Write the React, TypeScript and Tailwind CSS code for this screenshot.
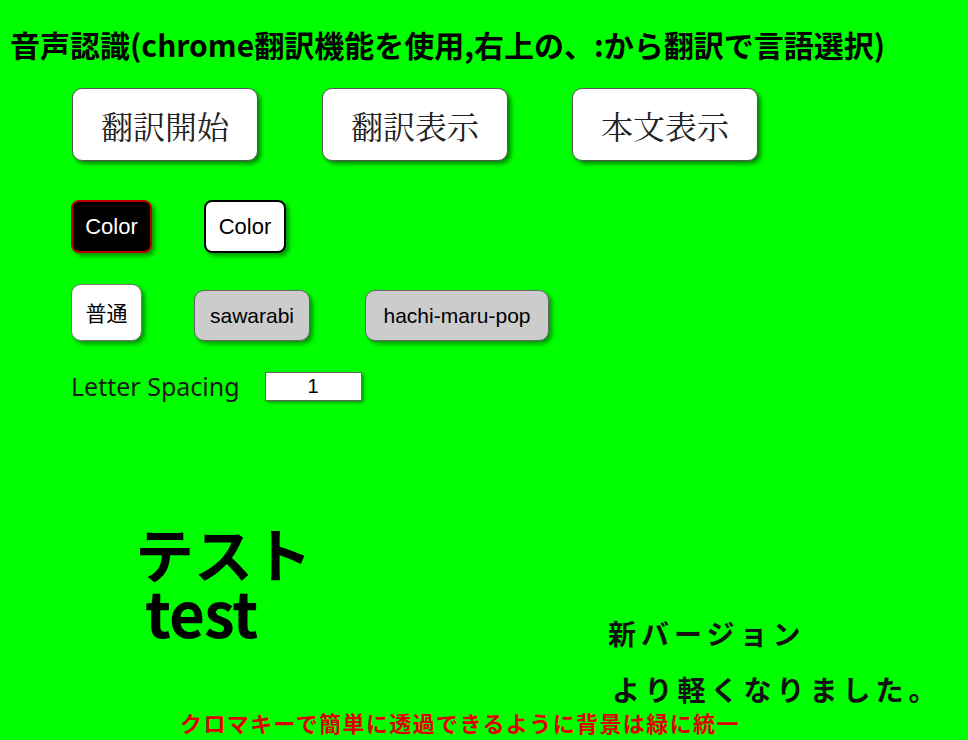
import React from 'react';

const jp = { fontFamily: '"Noto Sans CJK JP", "Noto Sans", sans-serif' };
const arial = { fontFamily: '"Liberation Sans", Arial, sans-serif' };

// big top buttons
const BigButton = ({ label }: { label: string }) => (
  <button
    className="w-[186px] h-[73px] bg-white rounded-[10px] border border-[#555] shadow-[3px_3px_4px_rgba(0,0,0,0.45)] text-[32px] text-[#222] leading-none"
    style={{ fontFamily: '"Noto Serif CJK JP", "Noto Sans CJK JP", serif' }}
  >
    {label}
  </button>
);

const FontButton = ({ label, w, active }: { label: string; w: string; active?: boolean }) => (
  <button
    className={
      active
        ? 'h-[57px] bg-white rounded-[10px] border border-[#777] shadow-[3px_3px_4px_rgba(0,0,0,0.4)] text-[21px] text-black ' + w
        : 'h-[51px] bg-[#cccccc] rounded-[10px] border border-[#666] shadow-[3px_3px_4px_rgba(0,0,0,0.4)] text-[21px] text-black ' + w
    }
    style={active ? jp : arial}
  >
    {label}
  </button>
);

export default function App() {
  return (
    <div className="w-full h-[740px] bg-[#00ff00] overflow-hidden relative">
      <h1 className="pl-[10px] pt-[24px] text-[30px] font-bold leading-[40px] text-black whitespace-nowrap" style={jp}>
        音声認識(chrome翻訳機能を使用,右上の、:から翻訳で言語選択)
      </h1>

      <div className="flex gap-[64px] pl-[72px] mt-[24px]">
        <BigButton label="翻訳開始" />
        <BigButton label="翻訳表示" />
        <BigButton label="本文表示" />
      </div>

      <div className="flex gap-[52px] pl-[71px] mt-[39px]">
        <button
          className="w-[81px] h-[53px] bg-black text-white rounded-[8px] border-2 border-[#c00000] shadow-[3px_3px_4px_rgba(0,0,0,0.4)] text-[22px]"
          style={arial}
        >
          Color
        </button>
        <button
          className="w-[82px] h-[53px] bg-white text-black rounded-[8px] border-2 border-black shadow-[3px_3px_4px_rgba(0,0,0,0.4)] text-[22px]"
          style={arial}
        >
          Color
        </button>
      </div>

      <div className="flex items-end gap-[52px] pl-[71px] mt-[31px]">
        <FontButton label="普通" w="w-[71px]" active />
        <div className="flex gap-[55px]">
          <FontButton label="sawarabi" w="w-[116px]" />
          <FontButton label="hachi-maru-pop" w="w-[184px]" />
        </div>
      </div>

      <div className="flex items-center pl-[71px] mt-[28px] gap-[25px]">
        <span className="text-[25px] text-[#1a1a1a] leading-[34px]" style={{ fontFamily: '"Noto Sans", sans-serif' }}>
          Letter Spacing
        </span>
        <input
          readOnly
          value="1"
          className="w-[97px] h-[29px] bg-white border border-[#666] shadow-[2px_2px_3px_rgba(0,0,0,0.35)] text-center text-[20px] text-black outline-none"
          style={arial}
        />
      </div>

      <div className="flex mt-[118px]">
        <div className="pl-[135px] pt-[3px] w-[608px] font-bold text-black" style={jp}>
          <div className="text-[59px] leading-[58px]">テスト</div>
          <div className="text-[62px] leading-[58px] pl-[10px] tracking-[-1px]">test</div>
        </div>
        <div className="pt-[84px] font-bold text-[#111] text-[28px] tracking-[5px] leading-[56px]" style={jp}>
          <div>新バージョン</div>
          <div className="pl-[4px]">より軽くなりました。</div>
        </div>
      </div>

      <div className="absolute left-[180px] top-[707px] text-[22px] font-bold text-[#e00000] tracking-[1.4px] leading-[30px]" style={jp}>
        クロマキーで簡単に透過できるように背景は緑に統一
      </div>
    </div>
  );
}
